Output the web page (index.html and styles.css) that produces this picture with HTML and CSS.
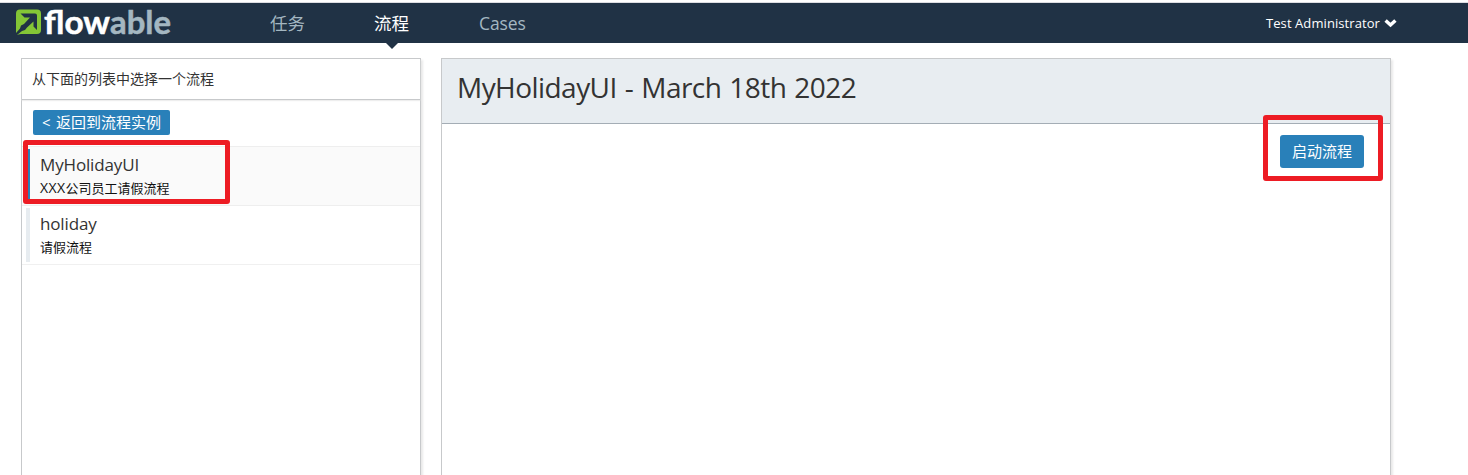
FILE: index.html
```html
<!DOCTYPE html>
<html lang="zh-CN">
<head>
<meta charset="utf-8">
<title>Flowable</title>
<link rel="stylesheet" href="styles.css">
</head>
<body>
<header class="navbar">
  <svg class="logo" width="160" height="40" viewBox="0 0 160 40">
    <path fill="#84c636" d="M5 6.500H22Q26 6.500 26 10.500V27Q26 31 22 31H6L1 32V10.500Q1 6.500 5 6.500Z"/>
    <path fill="#203245" d="M5.500 10.500H20Q22 10.500 22 12.500V27L18.500 23.500V18.500L12 24.500L10 27L7 28L2 32H1V30L5 25.500L6 22.500L9 21L15 14.500H9.500Z"/>
    <text class="logo-text" x="29" y="31" textLength="66" lengthAdjust="spacingAndGlyphs" fill="#fff" stroke="#fff">flow</text>
    <text class="logo-text" x="95" y="31" textLength="61" lengthAdjust="spacingAndGlyphs" fill="#a4b7c1" stroke="#a4b7c1">able</text>
  </svg>
  <nav class="tabs">
    <a class="tab tab-task">任务</a>
    <a class="tab tab-process active">流程</a>
    <a class="tab tab-cases">Cases</a>
  </nav>
  <div class="user"><span class="user-name">Test Administrator</span>
    <svg width="13" height="10" viewBox="0 0 13 10"><path d="M1.600 2.400L6.500 7L11.400 2.400" fill="none" stroke="#fff" stroke-width="3.400"/></svg>
  </div>
</header>
<main class="content">
  <aside class="panel list">
    <div class="list-header">从下面的列表中选择一个流程</div>
    <div class="back-row"><button class="btn back">&lt; 返回到流程实例</button></div>
    <div class="item selected"><div class="item-body"><div class="name">MyHolidayUI</div><div class="desc"><span class="latin">XXX</span>公司员工请假流程</div></div></div>
    <div class="item last"><div class="item-body"><div class="name">holiday</div><div class="desc">请假流程</div></div></div>
    <div class="mark mark-item"></div>
  </aside>
  <section class="panel detail">
    <div class="detail-header"><h2 class="title">MyHolidayUI - March 18th 2022</h2></div>
    <div class="actions"><button class="btn start">启动流程</button></div>
    <div class="mark mark-start"></div>
  </section>
</main>
</body>
</html>
```
FILE: styles.css
```css
* { box-sizing: border-box; }
body {
  margin: 0;
  height: 475px;
  overflow: hidden;
  background: #fff;
  color: #333;
  font-family: "Open Sans", "Noto Sans CJK SC", sans-serif;
}
.navbar {
  display: flex;
  height: 43px;
  padding-left: 15px;
  background: #203245;
  border-style: solid;
  border-width: 3px 0 0;
  border-image: linear-gradient(#fff 2px, #dcdde2 2px) 3;
}
.logo { width: 160px; height: 40px; flex: none; }
.logo-text { font: 700 32px Lato, sans-serif; stroke-width: .5px; }
.tabs { display: flex; width: 1091px; padding-left: 95px; }
.tab {
  position: relative;
  height: 40px;
  color: #a4b7c1;
  font-size: 17.500px;
  line-height: 41px;
  white-space: nowrap;
}
.tab-task, .tab-process { width: 104px; }
.tab-cases { padding-left: 1px; letter-spacing: -.1px; }
.active { color: #fff; }
.active::after {
  content: "";
  position: absolute;
  left: 12px;
  top: 40px;
  border: 6px solid transparent;
  border-top-color: #203245;
  border-bottom: 0;
}
.user {
  display: flex;
  align-items: center;
  gap: 4px;
  height: 40px;
  color: #fff;
  font-size: 13px;
  letter-spacing: .08px;
  white-space: nowrap;
}
.content { display: flex; gap: 20px; padding: 15px 0 0 21px; }
.panel {
  position: relative;
  height: 440px;
  border: 1px solid #c7c9cb;
  background: #fff;
  box-shadow: 2px 2px 2px rgba(0, 0, 0, .09);
}
.list { width: 400px; }
.list-header {
  height: 41px;
  padding-left: 10px;
  border-bottom: 1px solid #c7c9cb;
  box-shadow: 0 1px 1px #eee;
  font-size: 14px;
  line-height: 40px;
}
.back-row { height: 46px; padding: 10px 0 0 11px; }
.btn {
  display: block;
  border: 0;
  padding: 0;
  border-radius: 2px;
  background: #2980b9;
  color: #fff;
  font-family: inherit;
  font-size: 15px;
  white-space: nowrap;
}
.back { width: 137px; height: 25px; line-height: 25px; word-spacing: 1.500px; }
.item {
  height: 59px;
  padding: 2px 4px 3px;
  border-top: 1px solid #eee;
}
.last { border-bottom: 1px solid #f0f0f0; height: 60px; }
.item-body { height: 54px; padding-left: 10px; border-left: 4px solid #e7ecf0; }
.selected { background: #fafafa; }
.selected .item-body { border-color: #2980b9; }
.selected .desc { line-height: 22px; }
.name { font-size: 17px; line-height: 25px; height: 28px; padding-top: 3px; letter-spacing: -.15px; }
.desc { color: #111; font-size: 13px; line-height: 23px; }
.latin { font-size: 14px; letter-spacing: .4px; line-height: 1; }
.mark { position: absolute; border: 5px solid #ed1c24; border-radius: 3px; }
.mark-item { left: 1px; top: 81px; width: 207px; height: 64px; }
.mark-start { left: 821px; top: 56px; width: 120px; height: 66px; }
.detail { width: 950px; }
.detail-header { height: 65px; padding: 9px 15px; background: #e8edf1; border-bottom: 1px solid #a4adb5; }
.title { margin: 0; font-size: 28px; font-weight: 400; line-height: 38px; letter-spacing: -.55px; word-spacing: 1.300px; white-space: nowrap; }
.actions { display: flex; justify-content: flex-end; padding: 11px 26px 0 0; }
.start { width: 84px; height: 33px; border-radius: 3px; line-height: 33px; }
```
